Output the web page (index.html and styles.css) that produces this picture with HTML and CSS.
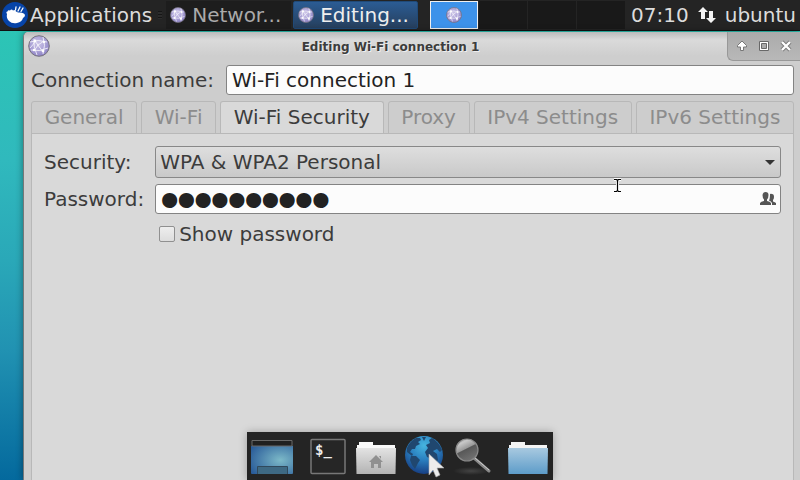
FILE: index.html
```
<!DOCTYPE html>
<html lang="en">
<head>
<meta charset="utf-8">
<title>Editing Wi-Fi connection 1</title>
<link rel="stylesheet" href="styles.css">
</head>
<body>
<svg class="defs" width="0" height="0" aria-hidden="true">
  <defs>
    <radialGradient id="ball" cx="45%" cy="38%" r="62%">
      <stop offset="0" stop-color="#cdc6e8"/><stop offset=".6" stop-color="#aaa1d6"/><stop offset="1" stop-color="#8d82c4"/>
    </radialGradient>
    <symbol id="net" viewBox="0 0 22 22">
      <circle cx="11" cy="11" r="10.3" fill="url(#ball)" stroke="#77737f" stroke-width="1"/>
      <g fill="none" stroke="#fff" stroke-width=".9" opacity=".85">
        <path d="M2 7Q10 4 19 7M6 4Q5 12 9 20M15 2Q18 10 15 19M2 13Q6 9 7 6M3 15Q12 17 20 13M7 6L15 17M16 6Q9 9 6 16"/>
      </g>
      <g fill="#fff"><circle cx="7" cy="6" r="1.4"/><circle cx="16" cy="7" r="1.2"/><circle cx="6" cy="15" r="1.2"/><circle cx="15" cy="16" r="1.4"/></g>
    </symbol>
  </defs>
</svg>
<header class="panel">
  <button class="apps" type="button">
    <svg width="26" height="26" viewBox="0 0 26 26" aria-hidden="true">
      <circle cx="13" cy="13" r="13" fill="#0744a8"/>
      <path fill="#fff" d="M5 12Q3.500 9.500 5.500 9.500Q6 7.500 8 8.500Q9.500 6.500 11 8.500Q13 7 14 9.500L16 10.500Q22 10 23 13Q23 15 21 16Q20 20 15 21Q10 22 7 19Q4 16 5 12Z"/>
      <path d="M16 9L18 5M19 9.500L21 6M13.500 8L14 5" stroke="#fff" stroke-width="1.300" stroke-linecap="round"/>
    </svg>
    <span>Applications</span>
  </button>
  <span class="grip" aria-hidden="true"></span>
  <nav class="tasks">
    <button class="task" type="button"><svg width="16" height="16" aria-hidden="true"><use href="#net"/></svg><span>Networ...</span></button>
    <button class="task active" type="button"><svg width="16" height="16" aria-hidden="true"><use href="#net"/></svg><span>Editing...</span></button>
  </nav>
  <div class="pager">
    <button class="space current" type="button" aria-label="Workspace 1"><svg width="16" height="16" aria-hidden="true"><use href="#net"/></svg></button>
    <button class="space" type="button" aria-label="Workspace 2"></button>
    <button class="space" type="button" aria-label="Workspace 3"></button>
    <button class="space" type="button" aria-label="Workspace 4"></button>
  </div>
  <div class="status">
    <time>07:10</time>
    <svg width="18" height="18" viewBox="0 0 18 18" aria-hidden="true"><path fill="#f4f4f4" d="M5 1L10 6H7V13H3V6H0ZM13 17L8 12H11V5H15V12H18Z"/></svg>
    <span>ubuntu</span>
  </div>
</header>
<main class="window">
  <div class="titlebar">
    <svg width="22" height="22" aria-hidden="true"><use href="#net"/></svg>
    <h1>Editing Wi-Fi connection 1</h1>
    <div class="controls">
      <button type="button" aria-label="Shade"><svg width="12" height="12" viewBox="0 0 12 12"><path d="M6 1L10.500 5.500V7H7.500V10.500H4.500V7H1.500V5.500Z" fill="#fff" stroke="#777"/></svg></button>
      <button type="button" aria-label="Maximize"><svg width="12" height="12" viewBox="0 0 12 12"><path d="M1.500 1.500H10.500V10.500H1.500Z" fill="#fff" stroke="#686868"/><path d="M3.500 3.500H8.500V8.500H3.500Z" fill="#aaa" stroke="#686868"/></svg></button>
      <button type="button" aria-label="Close"><svg width="12" height="12" viewBox="0 0 12 12"><path d="M2 2L10 10M10 2L2 10" stroke="#777" stroke-width="4"/><path d="M2 2L10 10M10 2L2 10" stroke="#fff" stroke-width="2.400"/></svg></button>
    </div>
  </div>
  <form class="editor">
    <div class="name">
      <label for="conn">Connection name:</label>
      <input id="conn" class="field" type="text" value="Wi-Fi connection 1">
    </div>
    <div class="tabs" role="tablist">
      <button type="button" role="tab">General</button>
      <button type="button" role="tab">Wi-Fi</button>
      <button type="button" role="tab" class="selected" aria-selected="true">Wi-Fi Security</button>
      <button type="button" role="tab">Proxy</button>
      <button type="button" role="tab">IPv4 Settings</button>
      <button type="button" role="tab">IPv6 Settings</button>
    </div>
    <section class="page" role="tabpanel">
      <label for="sec">Security:</label>
      <div class="combo">
        <select id="sec"><option>WPA &amp; WPA2 Personal</option></select>
        <svg width="10" height="5" viewBox="0 0 10 5" aria-hidden="true"><path d="M0 0H10L5 5Z" fill="#333"/></svg>
      </div>
      <label for="pass">Password:</label>
      <div class="secret">
        <input id="pass" class="field" type="password" autocomplete="off" value="password10">
        <svg class="people" width="16" height="14" viewBox="0 0 16 14" aria-hidden="true"><path fill="#555" d="M0 13V11Q1 9.500 4 9V7.500Q2.500 6 2.500 3Q3 0 5.500 0Q8.500 0 8.500 3Q8.500 6 7 7.500V9Q10 9.500 11 11V13ZM10 2Q11 1.500 12 2Q14 2 14 5Q14 7 13 8V9.500Q15 10 16 11V13H12V11Q11 9 9 8.500Q10 7 10 2Z"/></svg>
      </div>
      <label class="show"><input type="checkbox"><span>Show password</span></label>
    </section>
  </form>
  <svg class="cursor" width="9" height="15" viewBox="0 0 9 15" aria-hidden="true"><path d="M1 1.500H3.500L4.500 2.500L5.500 1.500H8M4.500 2V13M1 13.500H3.500L4.500 12.500L5.500 13.500H8" fill="none" stroke="#fff" stroke-width="3"/><path d="M1 1.500H3.500L4.500 2.500L5.500 1.500H8M4.500 2V13M1 13.500H3.500L4.500 12.500L5.500 13.500H8" fill="none" stroke="#000" stroke-width="1.200"/></svg>
</main>
<nav class="dock" aria-label="Launchers">
  <button type="button" aria-label="Show desktop"><svg width="48" height="48" viewBox="0 -2 48 48">
    <defs><radialGradient id="desk" cx=".7" cy=".5" r=".8"><stop offset="0" stop-color="#7cb9c8"/><stop offset="1" stop-color="#2a5c99"/></radialGradient></defs>
    <path d="M3 12H45V39Q45 40 44 40H4Q3 40 3 39Z" fill="url(#desk)"/><path d="M4 6.500H44V12H4Z" fill="#202020" stroke="#686868"/><path d="M9.500 40V32.500H39.500V40" fill="#3e6983" stroke="#30495c"/></svg></button>
  <span class="gap" aria-hidden="true"></span>
  <button type="button" aria-label="Terminal"><svg width="48" height="48" viewBox="0 -2 48 48"><rect x="7" y="5.500" width="34" height="34" rx="1" fill="#262626" stroke="#777" stroke-width="1.500"/><text class="prompt" x="11" y="21">$_</text></svg></button>
  <button type="button" aria-label="Home folder"><svg width="48" height="48" viewBox="0 -2 48 48">
    <defs><linearGradient id="home" x2="0" y2="1"><stop offset="0" stop-color="#e3e3e3"/><stop offset="1" stop-color="#b3b3b3"/></linearGradient></defs>
    <path d="M5 14V11H7V8H21V11H43V14Z" fill="#f8f8f8"/><path d="M4 14H44L43.500 40H4.500Z" fill="url(#home)"/><path d="M24 21L31 28H29V34H26V30H22V34H19V28H17ZM27 22H29V25Z" fill="#909090"/></svg></button>
  <button type="button" aria-label="Web browser"><svg width="48" height="48" viewBox="0 -2 48 48">
    <defs><radialGradient id="sea" cx=".5" cy=".25" r=".75"><stop offset="0" stop-color="#46b5df"/><stop offset=".5" stop-color="#2a80c0"/><stop offset="1" stop-color="#173f83"/></radialGradient></defs>
    <circle cx="24" cy="21" r="19" fill="url(#sea)"/>
    <path fill="#20476f" d="M7 14Q10 7 16 4L20 4L21 6L18 8L20 10L16 12L15 15L12 15L10 18L13 20L12 22L7 18ZM11 22L16 22L20 26L18 29L15 35L12 31L10 26ZM22 3L26 3L24 7ZM29 6L32 4Q39 8 42 16L40 18L37 15L33 17L37 20L38 26L34 31L32 25L27 23L25 18L28 14L26 11L30 9Z"/>
    <path d="M29 20V41L33 36L36 43L40 41L37 34H44Z" fill="#ececec" stroke="#aaa" stroke-width=".6"/></svg></button>
  <button type="button" aria-label="Application finder"><svg width="48" height="48" viewBox="0 -2 48 48">
    <defs><linearGradient id="lens" x2=".5" y2="1"><stop offset="0" stop-color="#8a8a8a"/><stop offset=".25" stop-color="#c8c8c8"/><stop offset=".52" stop-color="#999"/><stop offset=".56" stop-color="#585858"/><stop offset="1" stop-color="#707070"/></linearGradient>
    <radialGradient id="shade"><stop offset="0" stop-color="#444"/><stop offset="1" stop-color="#242424"/></radialGradient></defs>
    <ellipse cx="23" cy="37" rx="18" ry="4" fill="url(#shade)"/><path d="M26 24L41 37" stroke="#888" stroke-width="3" stroke-linecap="round"/><path d="M27 24L41 36" stroke="#ccc" stroke-width="1"/><circle cx="19" cy="16" r="11" fill="url(#lens)" stroke="#8a8a8a" stroke-width="1.200"/></svg></button>
  <span class="gap" aria-hidden="true"></span>
  <button type="button" aria-label="Files"><svg width="48" height="48" viewBox="0 -2 48 48">
    <defs><linearGradient id="files" x2="0" y2="1"><stop offset="0" stop-color="#a8c9e0"/><stop offset="1" stop-color="#5d9cc9"/></linearGradient></defs>
    <path d="M5 14V11H7V8H21V11H43V14Z" fill="#f4f4f4"/><path d="M4 14H44L43.500 40H4.500Z" fill="url(#files)"/></svg></button>
</nav>
</body>
</html>
```

FILE: styles.css
```
* { box-sizing: border-box; }
body {
  margin: 0;
  height: 100vh;
  overflow: hidden;
  display: flex;
  flex-direction: column;
  background: linear-gradient(#2cc5b5 30px, #30b9bd 160px, #2aa8b8 260px, #2192b2 350px, #04699d 100%);
  font: 20px/24px "DejaVu Sans", sans-serif;
  color: #3c3c3c;
}
button, input, select { font: inherit; color: inherit; margin: 0; padding: 0; border: 0; background: none; border-radius: 0; }
svg { display: block; flex: none; }
.defs { position: absolute; }

.panel {
  height: 31px;
  flex: none;
  display: flex;
  align-items: center;
  background: #242424;
  border-bottom: 1px solid #111;
  color: #dcdcdc;
  white-space: nowrap;
}
.apps { display: flex; align-items: center; gap: 2px; padding-left: 2px; }
.grip { width: 4px; height: 8px; margin: 0 4px 0 6px; background: repeating-linear-gradient(#161616 0 1px, #2c2c2c 1px 3px); }
.tasks { display: flex; gap: 2px; }
.task {
  width: 125px;
  height: 28px;
  display: flex;
  align-items: center;
  gap: 6px;
  padding-left: 4px;
  background: #1d1d1d;
  color: #aaa;
}
.task.active {
  color: #eee;
  border: 1px solid #204a78;
  border-radius: 2px;
  background: linear-gradient(#2b5c94, #263f5d);
}
.pager { display: flex; gap: 1px; margin-left: 12px; }
.space { width: 48px; height: 28px; background: #191919; display: grid; place-items: center; }
.current { background: #3d92ea; border: 1px solid #f0f0f0; }
.status { margin-left: auto; display: flex; align-items: center; gap: 9px; padding-right: 4px; }

.window {
  position: relative;
  flex: 1;
  margin: 1px 0 0 23px;
  display: flex;
  flex-direction: column;
  background: #cdcdcd;
  border-left: 1px solid #777;
  border-radius: 5px 5px 0 0;
  box-shadow: 0 0 7px #0006;
}
.titlebar {
  height: 32px;
  flex: none;
  display: flex;
  align-items: flex-start;
  padding: 3px 0 0 4px;
  background: linear-gradient(#bbb, #dadada 8px, #cecece 24px);
  border-radius: 5px 5px 0 0;
}
h1 {
  flex: 1;
  margin: 0;
  padding-left: 4px;
  text-align: center;
  font-size: 12px;
  line-height: 24px;
  text-shadow: 1px 1px #eee;
}
.controls {
  display: flex;
  justify-content: space-around;
  width: 73px;
  height: 29px;
  margin-top: -3px;
  padding: 0 3px;
  background: linear-gradient(#aaa, #b8b8b8);
  border: 1px solid #989898;
  border-width: 0 0 1px 1px;
  border-radius: 0 0 0 6px;
}
.controls button { display: grid; place-items: center; width: 18px; }

.editor { flex: 1; display: flex; flex-direction: column; padding: 1px 6px 0 7px; }
.name { display: flex; align-items: center; gap: 12px; }
.field {
  flex: 1;
  width: 100%;
  min-width: 0;
  height: 30px;
  padding: 0 5px;
  background: #fcfcfc;
  color: #222;
  border: 1px solid #838383;
  border-radius: 3px;
}
.tabs { display: flex; gap: 4px; margin: 6px 0 -1px; white-space: nowrap; }
.tabs button {
  flex: 1 1 auto;
  height: 33px;
  padding: 0 12px 2px;
  color: #8c8c8c;
  border: 1px solid #b8b8b8;
  border-radius: 3px 3px 0 0;
}
.tabs .selected { color: #3c3c3c; background: #d9d9d9; border-bottom-color: #d9d9d9; }
.page {
  flex: 1;
  display: grid;
  grid-template-columns: auto 1fr;
  align-content: start;
  align-items: center;
  gap: 6px 11px;
  padding: 12px;
  background: #d9d9d9;
  border: 1px solid #b8b8b8;
  border-bottom: 0;
}
.combo, .secret { display: grid; align-items: center; }
.combo > *, .secret > * { grid-area: 1 / 1; }
.combo svg { justify-self: end; margin-right: 6px; pointer-events: none; }
.combo select {
  appearance: none;
  height: 32px;
  padding: 0 4px;
  background: linear-gradient(#dedede, #c9c9c9);
  border: 1px solid #888;
  border-radius: 3px;
}
.secret .people { justify-self: end; margin-right: 5px; }
#pass { font: 48px/28px "Liberation Sans", sans-serif; -webkit-text-stroke: 2px #222; }
.show { grid-column: 2; display: flex; align-items: center; gap: 4px; padding: 2px 4px; }
.show input {
  appearance: none;
  width: 16px;
  height: 16px;
  border: 1px solid #909090;
  border-radius: 2px;
  background: linear-gradient(#eee, #ddd);
}
.cursor { position: absolute; left: 589px; top: 146px; }

.dock {
  position: absolute;
  left: 50%;
  bottom: 0;
  transform: translateX(-50%);
  display: flex;
  align-items: center;
  padding: 0 1px;
  background: #242424;
  box-shadow: 0 0 8px #0004;
}
.gap { width: 8px; }
.prompt { font: bold 14px "DejaVu Sans Mono", monospace; fill: #eee; }
```
